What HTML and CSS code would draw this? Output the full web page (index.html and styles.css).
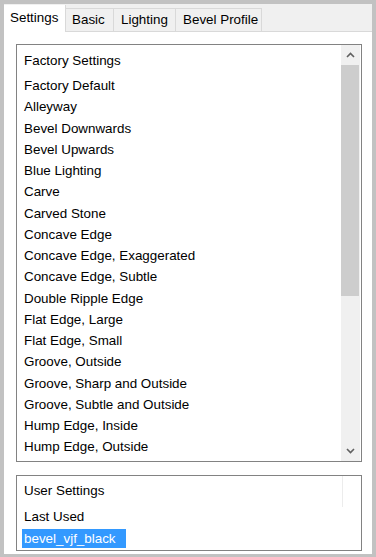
FILE: index.html
```html
<!DOCTYPE html>
<html lang="en">
    <head>
        <meta charset="UTF-8" />
        <meta name="viewport" content="width=device-width, initial-scale=1.0" />
        <title>Bevel Settings</title>
        <link rel="stylesheet" href="styles.css">
    </head>
    <body>
        <div class="frame">
            <div class="tabs">
                <div class="tab active">Settings</div>
                <div class="tab">Basic</div>
                <div class="tab">Lighting</div>
                <div class="tab">Bevel Profile</div>
            </div>
            <div class="page">
                <div class="listbox factory">
                    <div class="items">
                        <div class="heading">Factory Settings</div>
                        <div class="item">Factory Default</div>
                        <div class="item">Alleyway</div>
                        <div class="item">Bevel Downwards</div>
                        <div class="item">Bevel Upwards</div>
                        <div class="item">Blue Lighting</div>
                        <div class="item">Carve</div>
                        <div class="item">Carved Stone</div>
                        <div class="item">Concave Edge</div>
                        <div class="item">Concave Edge, Exaggerated</div>
                        <div class="item">Concave Edge, Subtle</div>
                        <div class="item">Double Ripple Edge</div>
                        <div class="item">Flat Edge, Large</div>
                        <div class="item">Flat Edge, Small</div>
                        <div class="item">Groove, Outside</div>
                        <div class="item">Groove, Sharp and Outside</div>
                        <div class="item">Groove, Subtle and Outside</div>
                        <div class="item">Hump Edge, Inside</div>
                        <div class="item">Hump Edge, Outside</div>
                    </div>
                    <div class="scrollbar">
                        <div class="arrow">
                            <svg width="9" height="6" viewBox="0 0 9 6"><path d="M1 5 L4.5 1.5 L8 5" fill="none" stroke="#606060" stroke-width="1.6"/></svg>
                        </div>
                        <div class="thumb"></div>
                        <div class="track"></div>
                        <div class="arrow">
                            <svg width="9" height="6" viewBox="0 0 9 6"><path d="M1 1 L4.5 4.5 L8 1" fill="none" stroke="#606060" stroke-width="1.6"/></svg>
                        </div>
                    </div>
                </div>
                <div class="listbox user">
                    <div class="items">
                        <div class="heading">User Settings</div>
                        <div class="item">Last Used</div>
                        <div class="item"><span class="selected">bevel_vjf_black</span></div>
                    </div>
                    <div class="ghost"></div>
                </div>
            </div>
        </div>
    </body>
</html>
```

FILE: styles.css
```css
body {
    margin: 0;
    font-family: "Liberation Sans", Arial, sans-serif;
    font-size: 13.4px;
    color: #000;
}
.frame {
    width: 376px;
    height: 557px;
    box-sizing: border-box;
    border: 4px solid #c2c2c2;
    background: #f0f0f0;
    display: flex;
    flex-direction: column;
}
.tabs {
    display: flex;
    align-items: flex-end;
    height: 27px;
    flex-shrink: 0;
}
.tab {
    height: 23px;
    line-height: 22px;
    box-sizing: border-box;
    background: #f0f0f0;
    border: 1px solid #d9d9d9;
    border-bottom: none;
    margin-left: -1px;
    white-space: nowrap;
}
.tab:nth-child(2) {
    width: 49px;
    padding-left: 6px;
}
.tab:nth-child(3) {
    width: 63px;
    padding-left: 7px;
}
.tab:nth-child(4) {
    width: 87px;
    padding-left: 7px;
}
.tab.active {
    width: 62px;
    height: 27px;
    line-height: 26px;
    background: #fff;
    margin-left: 0;
    border-top: none;
    border-left: none;
    position: relative;
    z-index: 1;
    margin-bottom: -1px;
    padding-left: 6px;
}
.page {
    flex: 1;
    background: #fff;
    border-top: 1px solid #d9d9d9;
    padding: 12px 10px 3px 12px;
    display: flex;
    flex-direction: column;
    gap: 13px;
}
.listbox {
    border: 1px solid #828282;
    display: flex;
    position: relative;
}
.factory {
    height: 418px;
    box-sizing: border-box;
}
.user {
    flex: 1;
}
.items {
    flex: 1;
    padding: 5px 0 0 7px;
}
.heading {
    line-height: 22px;
    margin-bottom: 3px;
}
.item {
    line-height: 21.25px;
}
.user .items {
    padding-top: 4px;
}
.user .heading {
    margin-bottom: 4px;
}
.user .item {
    line-height: 22px;
}
.selected {
    background: #3399ff;
    color: #fff;
    padding: 2px 10px 2px 2px;
    margin-left: -2px;
}
.scrollbar {
    width: 19px;
    background: #f0f0f0;
    display: flex;
    flex-direction: column;
    margin-right: 1px;
}
.arrow {
    height: 20px;
    display: flex;
    align-items: center;
    justify-content: center;
}
.thumb {
    height: 231px;
    background: #cdcdcd;
    margin-right: 1px;
}
.track {
    flex: 1;
}
.ghost {
    position: absolute;
    right: 18px;
    top: 0;
    width: 1px;
    height: 31px;
    background: #ececec;
}
```
